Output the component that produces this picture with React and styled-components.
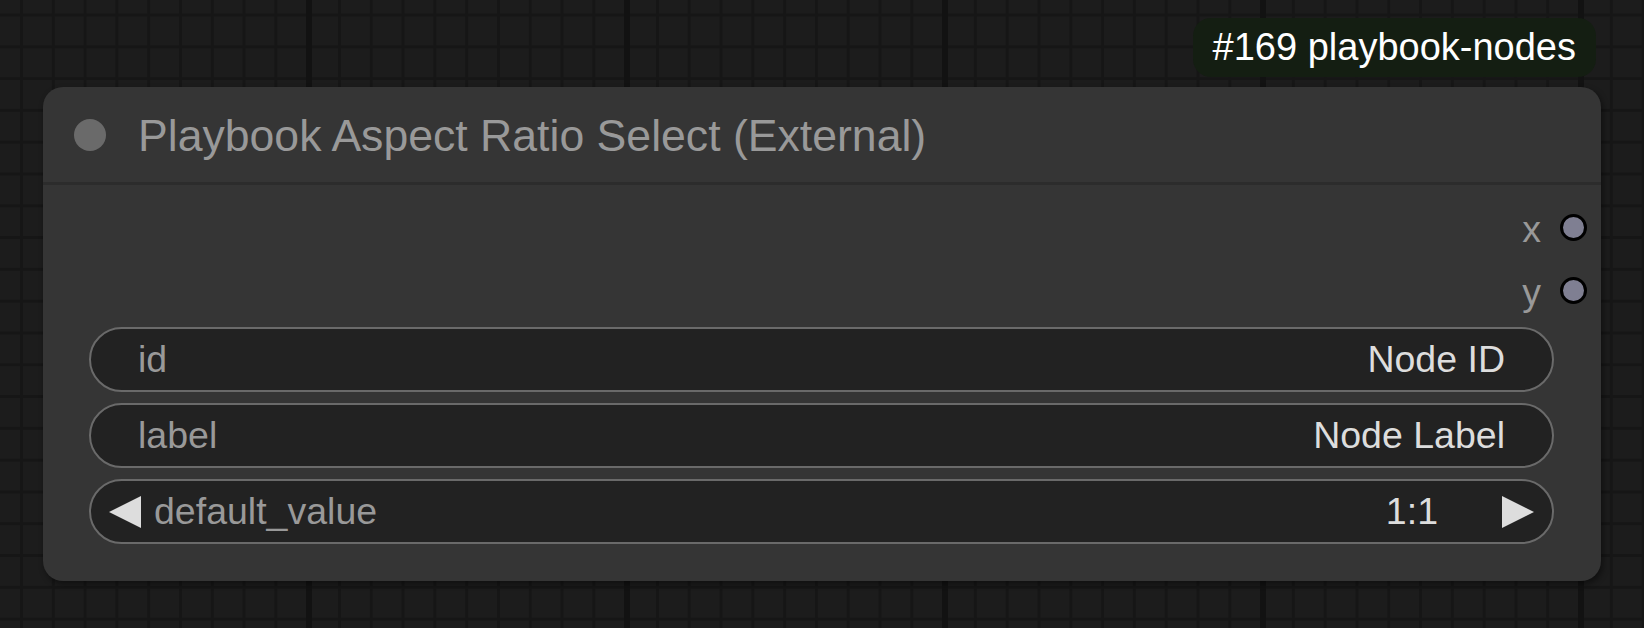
import React from 'react';
import styled, {createGlobalStyle} from 'styled-components';

//<<-- styling -->>
const GlobalStyle = createGlobalStyle`
    html, body {
        margin: 0;
        padding: 0;
        background: #1c1c1c;
        font-family: "Liberation Sans", Arial, sans-serif;
    }
`
const Canvas = styled.div`
    width: 1644px;
    height: 628px;
    overflow: hidden;
    box-sizing: border-box;
    padding: 87px 0 0 43px;
    background-color: #1c1c1c;
    background-image:
        linear-gradient(to right, #121212 6px, transparent 6px),
        linear-gradient(to right, #161616 3px, transparent 3px),
        linear-gradient(to bottom, #161616 3px, transparent 3px);
    background-size: 318px 100%, 31.8px 31.8px, 31.8px 31.8px;
    background-position: 306px 0, 20px 0, 0 13.5px;
`
const Node = styled.div`
    position: relative;
    width: 1558px;
    height: 494px;
    background: #353535;
    border-radius: 20px;
    box-shadow: 2px 3px 6px rgba(0, 0, 0, 0.45);
    display: flex;
    flex-direction: column;
`
const Badge = styled.div`
    position: absolute;
    top: -69px;
    right: 5px;
    height: 59px;
    line-height: 59px;
    padding: 0 20px;
    background: #141e12;
    border-radius: 18px;
    color: #ffffff;
    font-size: 38px;
    white-space: nowrap;
`
const TitleBar = styled.div`
    height: 95px;
    display: flex;
    align-items: center;
    padding-left: 31px;
    gap: 32px;
    border-bottom: 3px solid #2c2c2c;
    flex-shrink: 0;
`
const TitleDot = styled.div`
    width: 32px;
    height: 32px;
    border-radius: 50%;
    background: #6a6a6a;
`
const Title = styled.div`
    color: #999999;
    font-size: 44.6px;
    padding-top: 3px;
    white-space: nowrap;
`
const Body = styled.div`
    padding: 11px 0 0;
    display: flex;
    flex-direction: column;
`
const OutputRow = styled.div`
    height: 63px;
    display: flex;
    align-items: center;
    justify-content: flex-end;
    gap: 19px;
    padding-right: 14px;
`
const OutputName = styled.span`
    color: #999999;
    font-size: 37.5px;
    line-height: 1;
    padding-top: 4px;
`
const Slot = styled.div`
    width: 21px;
    height: 21px;
    border-radius: 50%;
    background: #7f7f92;
    border: 3px solid #000;
`
const Widgets = styled.div`
    margin: 5px 47px 0 46px;
    display: flex;
    flex-direction: column;
    gap: 11px;
`
const Pill = styled.div`
    box-sizing: border-box;
    height: 65px;
    border: 2.5px solid #6a6a6a;
    border-radius: 33px;
    background: #222222;
    display: flex;
    align-items: center;
    padding: ${p => p.combo ? '0 18px' : '0 47px'};
    font-size: 37.5px;
    white-space: nowrap;
`
const Label = styled.span`
    color: #999999;
    flex: 1;
    margin-left: ${p => p.combo ? '13px' : '0'};
`
const Value = styled.span`
    color: #dddddd;
    margin-right: ${p => p.combo ? '64px' : '0'};
`
const Arrow = styled.svg`
    width: 32px;
    height: 32px;
    flex-shrink: 0;
    fill: #dddddd;
`

//<<<--- code --->>>
const outputs = ['x', 'y']

const widgets = [
    {name: 'id', value: 'Node ID'},
    {name: 'label', value: 'Node Label'},
]

const App = () => {
    return (
        <Canvas>
            <GlobalStyle/>
            <Node>
                <Badge>#169 playbook-nodes</Badge>
                <TitleBar>
                    <TitleDot/>
                    <Title>Playbook Aspect Ratio Select (External)</Title>
                </TitleBar>
                <Body>
                    {outputs.map(o => (
                        <OutputRow key={o}>
                            <OutputName>{o}</OutputName>
                            <Slot/>
                        </OutputRow>
                    ))}
                    <Widgets>
                        {widgets.map(w => (
                            <Pill key={w.name}>
                                <Label>{w.name}</Label>
                                <Value>{w.value}</Value>
                            </Pill>
                        ))}
                        <Pill combo>
                            <Arrow viewBox="0 0 32 32"><polygon points="0,16 32,0 32,32"/></Arrow>
                            <Label combo>default_value</Label>
                            <Value combo>1:1</Value>
                            <Arrow viewBox="0 0 32 32"><polygon points="0,0 32,16 0,32"/></Arrow>
                        </Pill>
                    </Widgets>
                </Body>
            </Node>
        </Canvas>
    )
}
export default App;
